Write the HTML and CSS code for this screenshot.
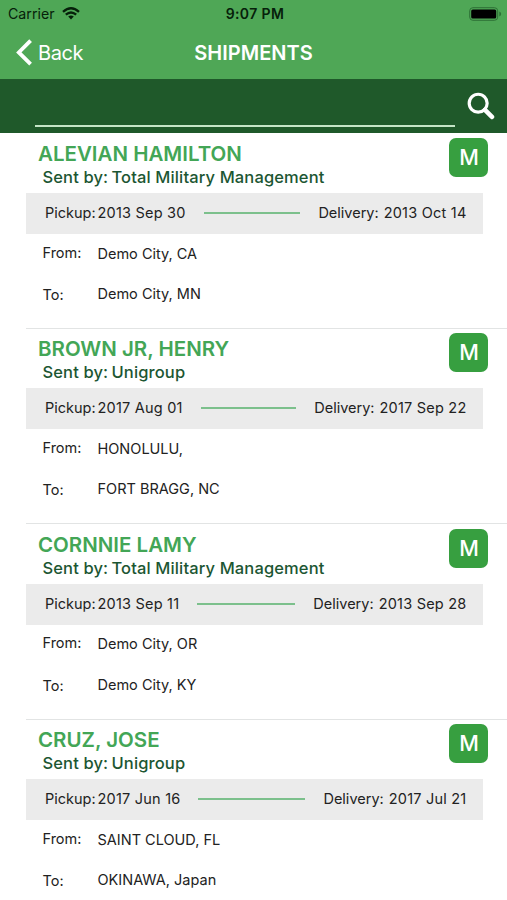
FILE: index.html
```html
<!DOCTYPE html>
<html lang="en">
<head>
<meta charset="utf-8">
<title>Shipments</title>
<link rel="stylesheet" href="styles.css">
</head>
<body>
<header class="top">
  <div class="status">
    <div class="carrier"><span>Carrier</span>
      <svg class="wifi" width="18" height="13" viewBox="0 0 18 13" fill="none" stroke="#06200a" stroke-width="2.3"><path d="M1 4.8Q9-2.3 17 4.8M3.8 7.7Q9 3.3 14.2 7.7"/><path d="M9 12.4L6.2 9.6Q9 7.4 11.8 9.6Z" fill="#06200a" stroke="none"/></svg>
    </div>
    <time class="clock">9:07 PM</time>
    <svg class="battery" width="33" height="14" viewBox="0 0 33 14"><rect x=".7" y=".7" width="28" height="12.6" rx="3.2" fill="none" stroke="#2d7136"/><rect x="2.2" y="2.4" width="25" height="9.2" rx="1.6" fill="#000"/><path d="M30.3 4.6Q32.2 5.2 32.2 7T30.3 9.4Z" fill="#2d7136"/></svg>
  </div>
  <nav class="nav">
    <a class="back"><svg width="17" height="27" viewBox="0 0 17 27" fill="none" stroke="#fff" stroke-width="3.8"><path d="M14.6 1.6L2.8 13.4L14.6 25.2"/></svg><span>Back</span></a>
    <h1 class="title">SHIPMENTS</h1>
  </nav>
</header>
<div class="search">
  <div class="field"></div>
  <svg width="28" height="28" viewBox="0 0 28 28" fill="none" stroke="#fff"><circle cx="11.2" cy="11.2" r="9" stroke-width="3.2"/><path d="M18 18L25 25" stroke-width="4.6" stroke-linecap="round"/></svg>
</div>
<main class="list">
  <article class="row">
    <div class="head"><h2 class="name">ALEVIAN HAMILTON</h2><span class="badge">M</span></div>
    <p class="sender"><span class="by">Sent by:</span><span class="org">Total Military Management</span></p>
    <div class="dates"><span class="label">Pickup:</span><span class="date">2013 Sep 30</span><i class="line"></i><span class="delivery">Delivery:</span><span class="date">2013 Oct 14</span></div>
    <p class="place from"><span>From:</span><span>Demo City, CA</span></p>
    <p class="place to"><span>To:</span><span>Demo City, MN</span></p>
  </article>
  <article class="row">
    <div class="head"><h2 class="name">BROWN JR, HENRY</h2><span class="badge">M</span></div>
    <p class="sender"><span class="by">Sent by:</span><span class="org">Unigroup</span></p>
    <div class="dates"><span class="label">Pickup:</span><span class="date">2017 Aug 01</span><i class="line"></i><span class="delivery">Delivery:</span><span class="date">2017 Sep 22</span></div>
    <p class="place from"><span>From:</span><span>HONOLULU,</span></p>
    <p class="place to"><span>To:</span><span>FORT BRAGG, NC</span></p>
  </article>
  <article class="row">
    <div class="head"><h2 class="name">CORNNIE LAMY</h2><span class="badge">M</span></div>
    <p class="sender"><span class="by">Sent by:</span><span class="org">Total Military Management</span></p>
    <div class="dates"><span class="label">Pickup:</span><span class="date">2013 Sep 11</span><i class="line"></i><span class="delivery">Delivery:</span><span class="date">2013 Sep 28</span></div>
    <p class="place from"><span>From:</span><span>Demo City, OR</span></p>
    <p class="place to"><span>To:</span><span>Demo City, KY</span></p>
  </article>
  <article class="row">
    <div class="head"><h2 class="name">CRUZ, JOSE</h2><span class="badge">M</span></div>
    <p class="sender"><span class="by">Sent by:</span><span class="org">Unigroup</span></p>
    <div class="dates"><span class="label">Pickup:</span><span class="date">2017 Jun 16</span><i class="line"></i><span class="delivery">Delivery:</span><span class="date">2017 Jul 21</span></div>
    <p class="place from"><span>From:</span><span>SAINT CLOUD, FL</span></p>
    <p class="place to"><span>To:</span><span>OKINAWA, Japan</span></p>
  </article>
</main>
</body>
</html>
```
FILE: styles.css
```css
* { box-sizing: border-box; margin: 0; padding: 0; }
body {
  width: 507px;
  height: 900px;
  overflow: hidden;
  background: #fff;
  color: #222;
  font-family: Inter, "Liberation Sans", sans-serif;
  font-size: 14.5px;
  white-space: nowrap;
}
.top { height: 79px; background: #4fa756; }
.status {
  display: grid;
  grid-template-columns: 1fr auto 1fr;
  align-items: center;
  height: 27px;
  padding: 0 5px 0 8px;
  color: #06200a;
  font-size: 14.2px;
}
.carrier { display: flex; align-items: center; gap: 7px; }
.clock { font-weight: 600; font-size: 14px; letter-spacing: 0.4px; }
.battery { justify-self: end; }
.nav {
  display: grid;
  grid-template-columns: 1fr auto 1fr;
  align-items: center;
  height: 51px;
  padding: 0 16px;
  color: #fff;
}
.back { display: flex; align-items: center; gap: 5px; font-size: 20px; letter-spacing: -0.45px; }
.title { font-size: 20px; font-weight: 600; }
.search {
  display: flex;
  align-items: flex-start;
  gap: 12px;
  height: 54px;
  padding: 13px 12px 0 35px;
  background: #1f592a;
}
.field { width: 421px; height: 35px; border-bottom: 2px solid #c4e5c6; }
.row { position: relative; height: 195.4px; padding: 5px 24.5px 0 25.5px; }
.row::after {
  content: "";
  position: absolute;
  left: 25.5px;
  right: 0;
  bottom: -0.5px;
  height: 1px;
  background: #e2e4e4;
}
.head { display: flex; justify-content: space-between; height: 28px; margin-right: -5px; padding-left: 12.5px; }
.name { font-size: 20.5px; line-height: 31px; font-weight: 600; color: #43a656; }
.badge {
  width: 39px;
  height: 39px;
  padding-left: 2px;
  border-radius: 7px;
  background: #379f40;
  color: #fff;
  font-size: 21.5px;
  font-weight: 500;
  line-height: 39px;
  text-align: center;
}
.sender { display: flex; height: 27px; padding-left: 17px; font-size: 16.5px; line-height: 23px; letter-spacing: 0.13px; font-weight: 500; color: #1c5632; }
.by { width: 69px; }
.dates {
  display: flex;
  align-items: center;
  height: 41px;
  padding: 0 16px 2px 19.5px;
  background: #ebebeb;
}
.label { width: 52.5px; }
.date { letter-spacing: 0.22px; }
.line { flex: 1; height: 2px; margin: 1px 18px 0; background: #7cc08c; }
.delivery { margin-right: 5px; }
.place { display: grid; grid-template-columns: 55px 1fr; padding-left: 17px; height: 40px; align-items: center; }
.from { padding-bottom: 2px; }
.from span:first-child { padding-bottom: 2px; }
.to { padding-bottom: 1px; }
.to span:first-child { padding-top: 2px; }
```
